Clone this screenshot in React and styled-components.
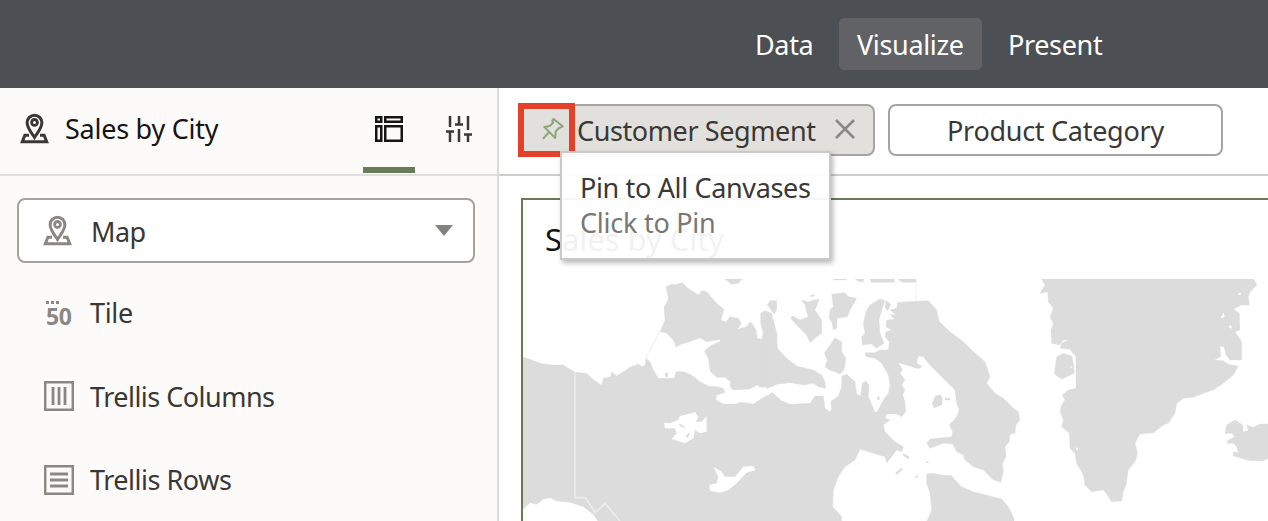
import React from "react";
import styled, { createGlobalStyle } from "styled-components";

const GlobalStyle = createGlobalStyle`
  * { box-sizing: border-box; }
  body { margin: 0; overflow: hidden; background: #fff; font-family: "Noto Sans", "Open Sans", sans-serif; }
  svg { display: block; flex: none; }
`;

const Page = styled.div`
  width: 1268px;
  height: 521px;
  display: flex;
  flex-direction: column;
  overflow: hidden;
  color: #3a3835;
  font-size: 27px;
  line-height: 36px;
  white-space: nowrap;
`;

const TopBar = styled.header`
  height: 88px;
  flex: none;
  display: flex;
  align-items: center;
  gap: 8px;
  padding-left: 737px;
  background: #4c4f54;
`;

const ModeTab = styled.div`
  width: ${(p) => p.$width}px;
  height: 52px;
  display: flex;
  align-items: center;
  padding: 2px 0 0 18px;
  border-radius: 5px;
  color: #fff;
  background: ${(p) => (p.$active ? "#606266" : "transparent")};
`;

const Label = styled.span`
  font-size: ${(p) => p.$size || 27}px;
  letter-spacing: ${(p) => p.$spacing ?? -0.35}px;
`;

const Workspace = styled.div`
  flex: 1;
  min-height: 0;
  display: flex;
`;

const Sidebar = styled.aside`
  width: 499px;
  flex: none;
  border-right: 2px solid #dddcda;
  background: #fcfbfa;
`;

const SidebarHeader = styled.div`
  height: 88px;
  display: flex;
  align-items: flex-start;
  padding-left: 20px;
  border-bottom: 2px solid #e0dfdd;
  color: #161513;
`;

const VizTitle = styled.div`
  width: 343px;
  flex: none;
  height: 81px;
  display: flex;
  align-items: center;
  gap: 15px;
`;

const PanelTab = styled.div`
  width: 52px;
  flex: none;
  height: 85px;
  margin-right: 18px;
  display: flex;
  justify-content: center;
  padding-top: 28px;
  border-bottom: 6px solid ${(p) => (p.$active ? "#657c57" : "transparent")};
`;

const TypeSelect = styled.div`
  width: 458px;
  height: 65px;
  margin: 22px 0 0 17px;
  padding: 0 20px 0 24px;
  display: flex;
  align-items: center;
  gap: 18px;
  border: 2px solid #a5a3a0;
  border-radius: 8px;
  background: #fff;

  > span { padding-top: 2px; }
`;

const Caret = styled.i`
  margin-left: auto;
  border: 9px solid transparent;
  border-top: 11px solid #85827e;
  border-bottom: 0;
`;

const GrammarList = styled.div`
  padding: 8px 0 0 44px;
`;

const GrammarRow = styled.div`
  height: 83.5px;
  display: flex;
  align-items: center;
  gap: 16px;

  > span { padding-top: 1px; }
`;

const TileGlyph = styled.div`
  width: 30px;
  height: 31px;
  display: flex;
  flex-direction: column;
  align-items: flex-start;
  padding: 4px 0 0 2px;
  color: #8b8884;
`;

const TileDots = styled.div`
  display: flex;
  gap: 2px;
  i { width: 3px; height: 3px; background: #8b8884; }
`;

const TileNumber = styled.span`
  font-size: 23px;
  line-height: 24px;
  font-weight: 700;
  letter-spacing: -0.4px;
`;

const Main = styled.main`
  flex: 1;
  min-width: 0;
  display: flex;
  flex-direction: column;
`;

const FilterBar = styled.div`
  height: 88px;
  flex: none;
  display: flex;
  gap: 13px;
  padding: 16px 0 0 22px;
  border-bottom: 2px solid #cfcdca;
`;

const FilterChip = styled.div`
  position: relative;
  width: ${(p) => p.$width}px;
  height: 52px;
  display: flex;
  align-items: center;
  padding-left: ${(p) => p.$inset}px;
  border: 2px solid #a7a5a2;
  border-radius: 8px;
  background: ${(p) => (p.$selected ? "#e2e0dc" : "#fff")};

  > span { padding-top: 2px; }
`;

const Highlight = styled.div`
  position: absolute;
  left: -5px;
  top: -3px;
  width: 57px;
  height: 54px;
  border: 6px solid #e5402a;
`;

const Tooltip = styled.div`
  position: absolute;
  z-index: 2;
  left: 37px;
  top: 45px;
  width: 271px;
  height: 109px;
  padding: 17px 0 0 18px;
  display: flex;
  flex-direction: column;
  line-height: 35px;
  border: 2px solid #cac9c7;
  background: rgba(255, 255, 255, 0.94);
  box-shadow: 2px 3px 5px rgba(0, 0, 0, 0.28);
`;

const TooltipHint = styled.div`
  color: #797774;
`;

const CloseIcon = styled.svg`
  margin: -3px 0 0 19px;
`;

const Canvas = styled.section`
  flex: 1;
  margin: 22px 0 0 22px;
  border: solid #657c57;
  border-width: 2px 0 0 2px;
  overflow: hidden;
`;

const CanvasTitle = styled.div`
  height: 79px;
  padding: 21px 0 0 22px;
  color: #161513;
`;

const MapPinIcon = ({ color }) => (
  <svg width="30" height="31" viewBox="0 0 30 31" fill="none" stroke={color} strokeWidth="3">
    <path d="M14.500 24.500C12.200 20.800 7.100 15.400 7.100 9.600a7.400 7.400 0 0 1 14.800 0C21.900 15.400 16.800 20.800 14.500 24.500Z" />
    <circle cx="14.500" cy="9.400" r="2.900" strokeWidth="2.800" />
    <path d="M9 22.300H4.900L2.300 28.800H26.700L24.100 22.300H20" />
  </svg>
);

const GrammarIcon = () => (
  <svg width="28" height="27" viewBox="0 0 28 27" fill="none" stroke="#161513" strokeWidth="2.500">
    <path d="M1.250 1.250h5v4.500h-5zM10.250 1.250h16.500v4.500h-16.500zM1.250 10.250h5v14.500h-5zM10.250 10.250h16.500v14.500h-16.500z" />
  </svg>
);

const SlidersIcon = () => (
  <svg width="26" height="27" viewBox="0 0 26 27" fill="none" stroke="#3a3835" strokeWidth="2.500">
    <path d="M4 0v11M4 15v11M0 15.500h8M13 0v8M13 13v13M9 8.500h8M22 0v14M22 19v7M18 18.500h8" />
  </svg>
);

const TrellisIcon = ({ rows }) => (
  <svg width="30" height="30" viewBox="0 0 30 30" fill="none" stroke="#8b8884">
    <path strokeWidth="2.500" d="M1.200 1.200h27.600v27.600H1.200z" />
    <path strokeWidth="2.800" d={rows ? "M6 9h18M6 15h18M6 21h18" : "M9 6v18M15 6v18M21 6v18"} />
  </svg>
);

const PinSvg = styled.svg`
  margin: -2px 13px 0 0;
`;

const PushPin = () => (
  <PinSvg width="23" height="22" viewBox="0 0 23 22" fill="none" stroke="#8aa67a" strokeWidth="2" strokeLinejoin="round">
    <path d="M12.500 1L21.700 8.300 17.500 10.300 14.700 13.700 14.200 20 3.200 8.900 9 7.900 12 4.700 11.300 2.700ZM7.500 14.800L2 20.800" />
  </PinSvg>
);

const MapPicture = () => (
  <svg width="745" height="242" viewBox="9 27 2235 726" fill="#dcdcdc" stroke="#dcdcdc" strokeWidth="1" strokeLinejoin="round">
    <g>
      <path d="M9 262L30 268 60 280 100 285 130 285 165 307 200 310 215 325 245 346 250 325 272 320 275 305 290 318 310 305 330 292 355 282 365 290 375 285 378 265 390 275 400 300 415 325 463 325 468 305 490 305 515 315 540 335 565 348 590 350 610 355 615 368 590 375 588 390 610 402 645 402 665 397 700 402 722 388 755 370 780 388V755H235L220 733 190 710 150 697 110 693 90 683 70 688 50 703 30 698 9 718Z" />
      <path d="M438 50L455 42 465 44 488 38 500 52 535 75 545 62 560 65 590 100 612 118 603 150 618 157 630 140 655 145 664 160 652 178 680 170 690 155 700 165 708 180 712 205 725 208 730 190 722 160 722 130 735 122 755 130 760 160 770 190 772 240 790 255V335L750 350 720 352 712 345 690 357 640 360 630 350 632 335 615 322 590 322 572 305 568 290 565 265 553 243 575 225 600 215 600 208 560 215 540 203 510 215 485 222 468 232 460 210 440 190 420 185 435 150 432 110 440 100 445 85Z" />
      <path d="M615 27H667L655 40 635 43Z" />
      <path fill="#fff" stroke="none" d="M432 458L450 460 475 450 480 438 525 427 535 440 528 455 545 455 560 438 560 485 540 490 525 480 520 505 495 520 455 507 470 490 465 475 435 475ZM580 590L605 605 615 620 645 620 670 590 700 588 707 600 680 608 650 640 625 660 600 668 570 662 568 645 590 640 595 620Z" />
      <path d="M476 462L488 466 496 473 484 470ZM497 500L505 490 510 492 502 503ZM436 308h7v12h-7Z" />
      <path fill="none" stroke="#ebebeb" strokeWidth="5" d="M165 307V683L195 682 226 728 255 700 300 753" />
      <path fill="none" stroke="#eee" strokeWidth="3" d="M418 187L378 262" />
    </g>
    <g transform="translate(720 0)">
      <path d="M20 126L40 150 50 190 52 235 80 265 110 288 160 300 185 315 195 335 197 355 175 350 160 340 130 345 90 338 50 343 20 356Z" />
      <path d="M0 390L38 368 60 390 90 403 150 400 165 378 190 378 195 415 208 425 215 420 212 395 235 378 245 350 245 318 260 313 285 335 290 372 302 378 307 340 318 333 327 345 325 380 345 427 352 425 370 390 385 370 390 345 385 315 365 280 345 265 318 260 315 248 345 248 360 240 385 240 388 215 375 200 378 185 395 180 378 170 380 150 402 148 390 133 408 135 390 120 410 115 412 98 440 95 505 92 530 120 538 155 570 185 610 215 640 245 675 275 690 320 680 340 705 370 730 385 760 415 775 425 780 450 768 465 765 490 750 493 748 515 735 530 738 560 727 580 730 605 722 637 700 630 670 600 640 590 615 570 610 555 590 545 578 522 550 520 510 535 500 520 510 507 575 500 578 485 568 465 590 440 598 420 590 400 585 360 545 320 525 300 505 280 490 260 475 258 470 280 486 290 475 296 415 278 428 300 420 310 435 330 425 345 435 360 428 375 435 395 437 425 425 440 410 432 380 432 375 445 390 450 370 465 375 485 405 515 430 530 425 545 410 540 395 560 380 578 375 560 340 550 300 538 285 570 255 590 235 620 220 660 218 710 245 740V755H0Z" />
      <path d="M22 105L30 92 50 92 50 120 42 132ZM125 90L145 96 160 90 178 88 165 120 185 150 185 190 170 200 150 218 140 195 115 170 92 145 98 138 120 150 145 140 140 125 135 105ZM215 72L255 68 265 80 290 85 270 120 262 140 232 145 230 175 220 180 215 155 207 145 210 120 220 110ZM225 203L245 215 245 245 258 265 252 300 240 312 205 298 195 290 202 270 193 250ZM330 105L360 87 375 92 365 120 357 150 360 190 372 220 350 235 335 222 307 225 305 200 315 190 310 160 318 125Z" />
      <path d="M220 27h38v3h-38ZM285 27h25v8h-12ZM330 27h73v10h-70ZM415 27h53v10h-43ZM378 92l15 10-10 20-8-10ZM526 378l15-4 5 8v22l-25 10-4-15ZM555 385h15v5h-15ZM406 610l18-16 4 4-18 16ZM430 550l20 12-5 5-15-10ZM465 622l10-7v4l-8 6ZM500 574h5v4h-5ZM152 76l12-2v5l-12 1ZM352 380h6v9h-6Z" />
      <path d="M500 612L520 610 545 615 575 617 585 630 605 650 640 665 725 687 745 710 762 745V755H500L515 720 510 670 500 640Z" />
      <path fill="none" stroke="#f0f0f0" strokeWidth="3" d="M468 40V90" />
    </g>
    <g transform="translate(1500 0)">
      <path d="M65 27L700 27 711 45 690 65 685 80 688 105 665 105 640 118 658 130 660 180 645 185 665 215V270L630 270 618 255 612 230 600 228 602 260 583 270 610 272 625 283 655 288 640 315 610 340 580 360 550 370 520 382 490 385 470 400 465 430 445 460 430 465 400 488 360 492 345 520 352 545 348 570 325 600 318 645 310 665 305 693 275 695 262 675 250 660 215 665 195 645 190 615 170 580 165 550 150 535 148 490 125 470 130 450 120 425 125 405 135 390 127 375 145 360 168 355V260L150 238 120 235 125 220 145 210 130 210 118 225 95 220 93 180 100 160 90 140 100 115 85 95 83 65 60 70 75 45Z" />
      <path d="M110 260L130 250 155 258 160 280 163 310 125 328 103 312ZM615 490L620 465 645 450 668 465 670 485 685 482 680 465 700 472 720 462H744V565L730 572H690L640 558V545L655 548 650 530 640 520H620L625 510 645 500 635 490Z" />
      <path fill="#fff" stroke="none" d="M603 140l8-12 3 12-7 5ZM625 170l8-4 3 10ZM655 68h7v7h-7ZM168 533h6v6h-6ZM150 288l6 2-3 6Z" />
    </g>
  </svg>
);

export default function App() {
  return (
    <>
      <GlobalStyle />
      <Page>
        <TopBar>
          <ModeTab $width={94}><Label>Data</Label></ModeTab>
          <ModeTab $width={143} $active><Label>Visualize</Label></ModeTab>
          <ModeTab $width={130}><Label>Present</Label></ModeTab>
        </TopBar>
        <Workspace>
          <Sidebar>
            <SidebarHeader>
              <VizTitle>
                <MapPinIcon color="#3a3835" />
                <Label $spacing={-0.25}>Sales by City</Label>
              </VizTitle>
              <PanelTab $active><GrammarIcon /></PanelTab>
              <PanelTab><SlidersIcon /></PanelTab>
            </SidebarHeader>
            <TypeSelect>
              <MapPinIcon color="#8b8884" />
              <Label $spacing={-0.6}>Map</Label>
              <Caret />
            </TypeSelect>
            <GrammarList>
              <GrammarRow>
                <TileGlyph>
                  <TileDots><i /><i /><i /></TileDots>
                  <TileNumber>50</TileNumber>
                </TileGlyph>
                <Label>Tile</Label>
              </GrammarRow>
              <GrammarRow><TrellisIcon /><Label $spacing={-0.52}>Trellis Columns</Label></GrammarRow>
              <GrammarRow><TrellisIcon rows /><Label $spacing={-0.48}>Trellis Rows</Label></GrammarRow>
            </GrammarList>
          </Sidebar>
          <Main>
            <FilterBar>
              <FilterChip $width={354} $inset={18} $selected>
                <PushPin />
                <Label $spacing={-0.4}>Customer Segment</Label>
                <CloseIcon width="20" height="20" viewBox="0 0 20 20" stroke="#8b8884" strokeWidth="2.500">
                  <path d="M1 1L19 19M19 1L1 19" />
                </CloseIcon>
                <Highlight />
                <Tooltip>
                  <Label>Pin to All Canvases</Label>
                  <TooltipHint><Label $spacing={-0.25}>Click to Pin</Label></TooltipHint>
                </Tooltip>
              </FilterChip>
              <FilterChip $width={335} $inset={57}><Label $spacing={-0.28}>Product Category</Label></FilterChip>
            </FilterBar>
            <Canvas>
              <CanvasTitle><Label $size={31} $spacing={-0.05}>Sales by City</Label></CanvasTitle>
              <MapPicture />
            </Canvas>
          </Main>
        </Workspace>
      </Page>
    </>
  );
}
